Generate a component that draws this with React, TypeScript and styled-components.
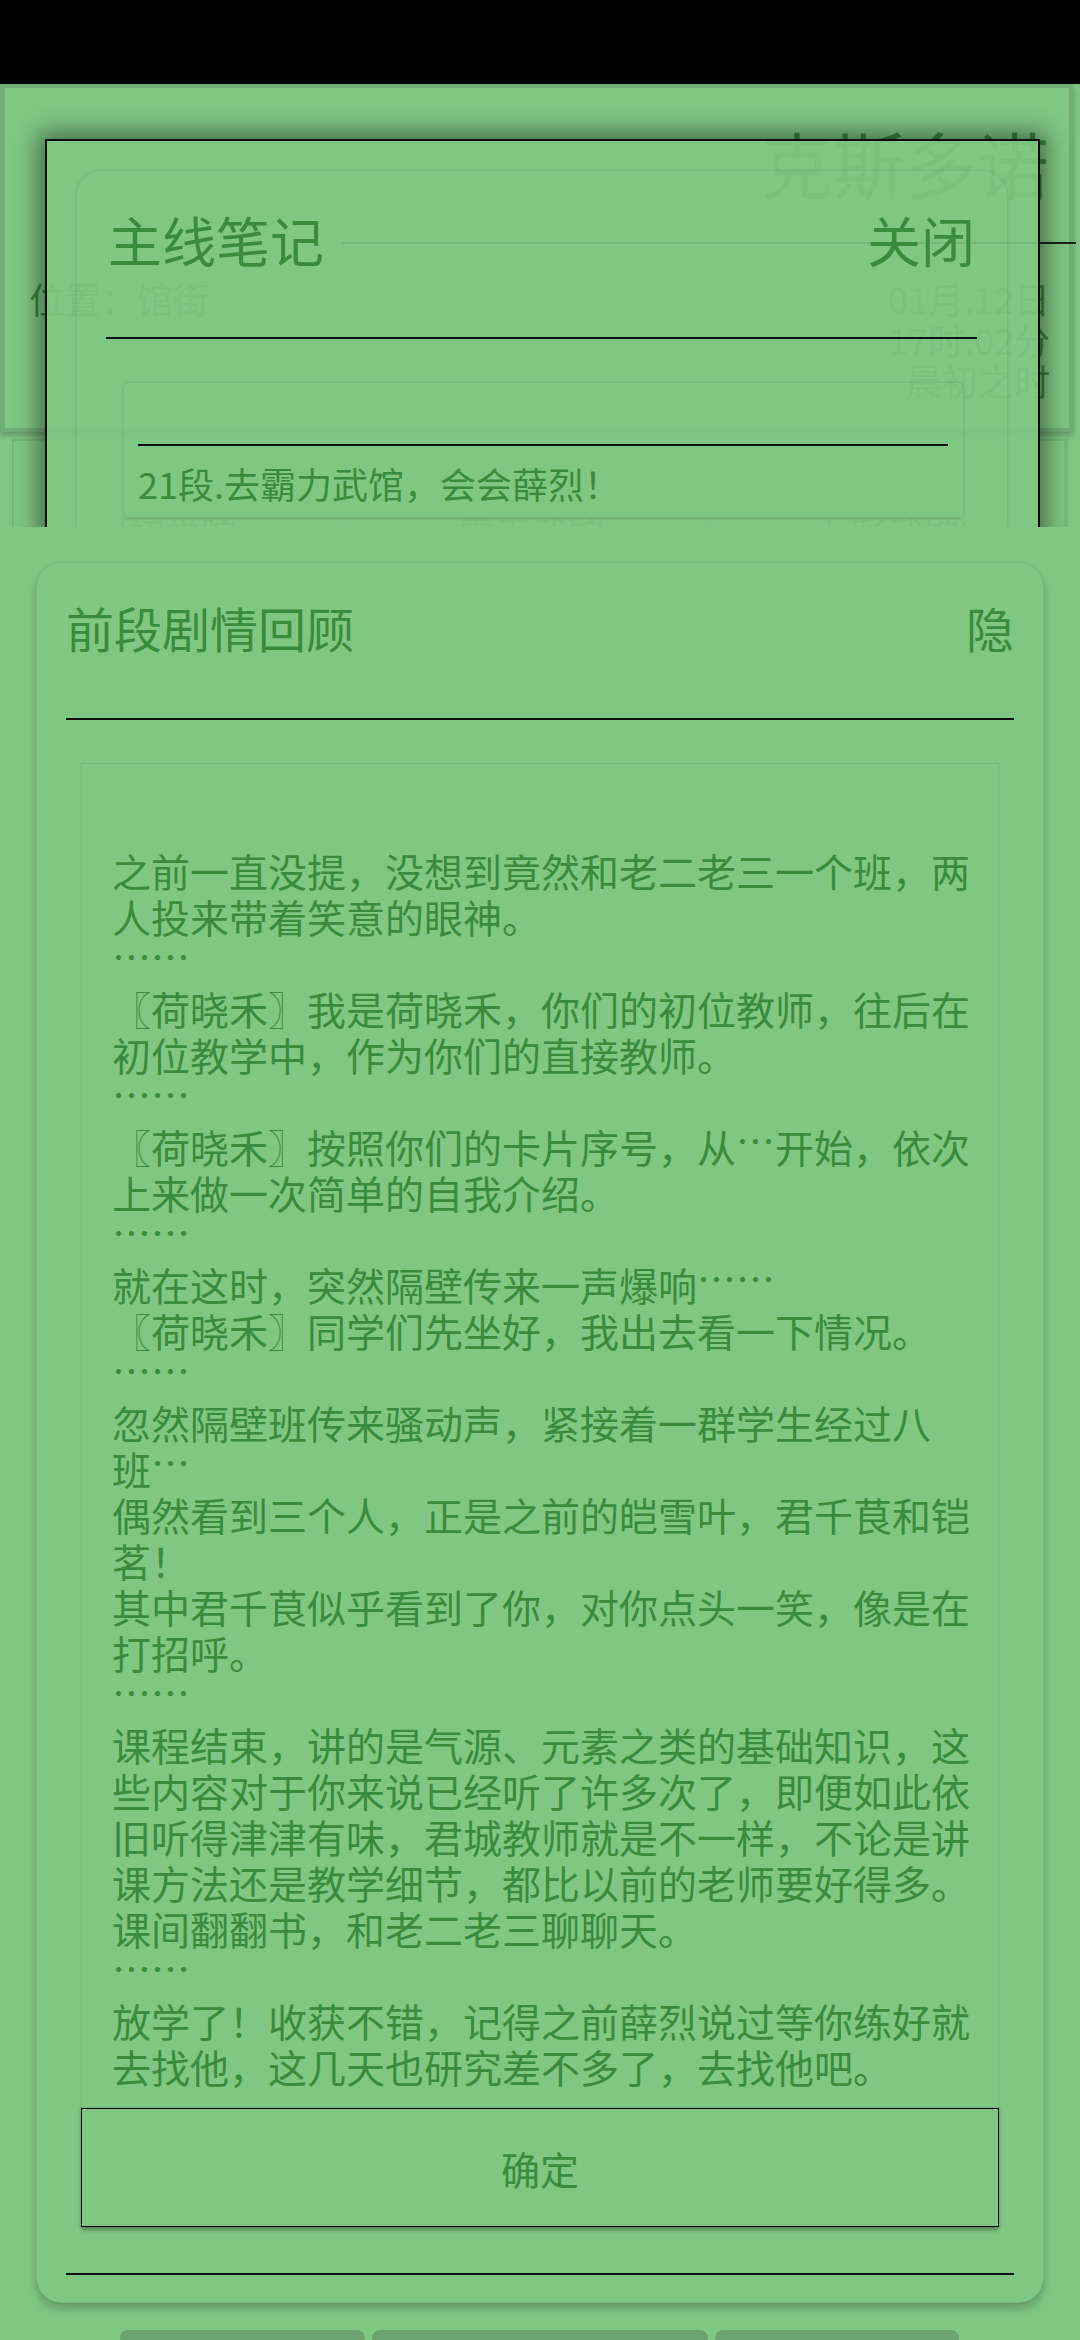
import React from "react"
import styled, { createGlobalStyle } from "styled-components"

const GREEN = "#81c784"
const INK = "#3a8b3e"

const GlobalStyle = createGlobalStyle`
  html, body {
    margin: 0;
    padding: 0;
    background: ${GREEN};
  }
  body {
    font-family: "Noto Sans CJK SC", "Noto Sans", sans-serif;
  }
`

const Screen = styled.div`
  position: relative;
  width: 1080px;
  height: 2340px;
  overflow: hidden;
  background: ${GREEN};
  color: ${INK};
  font-family: "Noto Sans CJK SC", sans-serif;
`

const StatusBar = styled.div`
  height: 84px;
  background: #000;
`

/* ---------- game screen behind the dialogs ---------- */

const InfoPanel = styled.section`
  box-sizing: border-box;
  height: 348px;
  margin-right: 7px;
  border: 4px solid rgba(0, 0, 0, 0.12);
  border-left-width: 5px;
  box-shadow: 0 3px 6px rgba(0, 0, 0, 0.25);
  display: flex;
  flex-direction: column;
`

const CityName = styled.div`
  margin-top: 29px;
  padding-right: 20px;
  font-size: 72px;
  line-height: 90px;
  text-align: right;
`

const CityRule = styled.div`
  margin: 35px -7px 0 337px;
  height: 2px;
  background: #1e1e1e;
`

const InfoRow = styled.div`
  margin-top: 34px;
  padding: 0 19px 0 24px;
  display: flex;
  justify-content: space-between;
  font-size: 36px;
  line-height: 41px;
`

const TimeCol = styled.div`
  text-align: right;
`

const TabRow = styled.div`
  margin: 7px 12px 0 12px;
  height: 130px;
  display: grid;
  grid-template-columns: 339px 358px 1fr;
  border: 2px solid rgba(0, 0, 0, 0.08);
`

const TabCell = styled.div`
  padding-top: 70px;
  text-align: center;
  font-size: 36px;
  line-height: 44px;
  border-right: 2px solid rgba(0, 0, 0, 0.06);
`

/* ---------- 主线笔记 dialog ---------- */

const NotesDialog = styled.div`
  position: absolute;
  left: 45px;
  top: 139px;
  width: 995px;
  height: 1500px;
  box-sizing: border-box;
  padding: 29px 30px 0 29px;
  border: 2px solid #0d0d0d;
  background: rgba(129, 199, 132, 0.9);
  box-shadow: 0 0 22px 7px rgba(0, 0, 0, 0.45);
`

const NotesCard = styled.div`
  height: 1300px;
  padding-top: 37px;
  border: 1px solid rgba(0, 0, 0, 0.06);
  border-radius: 26px;
  box-shadow: 0 1px 4px rgba(0, 0, 0, 0.1);
`

const DialogHeader = styled.div<{ $size: number; $line: number; $pad: string }>`
  display: flex;
  justify-content: space-between;
  align-items: center;
  padding: ${(p) => p.$pad};
  font-size: ${(p) => p.$size}px;
  line-height: ${(p) => p.$line}px;
`

const Rule = styled.div<{ $top: number; $left?: number; $right?: number }>`
  margin-top: ${(p) => p.$top}px;
  margin-left: ${(p) => p.$left ?? 0}px;
  margin-right: ${(p) => p.$right ?? 0}px;
  height: 2px;
  background: #111;
`

const QuestBox = styled.div<{ $gap: number }>`
  margin: ${(p) => p.$gap}px 43px 0 46px;
  min-height: 60px;
  padding: 61px 15px 12px 14px;
  border: 1px solid rgba(0, 0, 0, 0.07);
  border-radius: 6px;
  box-shadow: 0 1px 3px rgba(0, 0, 0, 0.1);
`

const QuestText = styled.div`
  margin-top: 15px;
  font-size: 36px;
  line-height: 44px;
`

/* ---------- 前段剧情回顾 sheet ---------- */

const Sheet = styled.div`
  position: absolute;
  top: 527px;
  left: 0;
  right: 0;
  bottom: 0;
  background: ${GREEN};
  display: flex;
  flex-direction: column;
`

const ReviewCard = styled.div`
  margin: 35px 36px 0;
  padding: 34px 29px 27px;
  border: 1px solid rgba(0, 0, 0, 0.04);
  border-radius: 26px;
  box-shadow: 0 0 2px rgba(0, 0, 0, 0.12), 0 6px 10px rgba(0, 0, 0, 0.22);
`

const StoryBox = styled.div`
  margin: 43px 15px 0;
  height: 1345px;
  box-sizing: border-box;
  padding: 83px 24px 18px 30px;
  border: 1px solid rgba(0, 0, 0, 0.07);
  box-shadow: 0 1px 2px rgba(0, 0, 0, 0.08);
  overflow: hidden;
  font-size: 39px;
  line-height: 46px;
`

const StoryLine = styled.div`
  margin: 0;
`

// the phone draws the ellipsis centred on the ideograph line, not on the baseline
const Dots = styled.span`
  position: relative;
  top: -0.17em;
`

const ConfirmButton = styled.div`
  margin: 0 15px;
  height: 119px;
  box-sizing: border-box;
  border: 1px solid #000;
  box-shadow: 0 3px 4px rgba(0, 0, 0, 0.35);
  display: flex;
  align-items: center;
  justify-content: center;
  font-size: 39px;
`

const NavBars = styled.div`
  margin-top: 27px;
  padding-left: 120px;
  display: flex;
  gap: 7px;
`

const NavBar = styled.div<{ $w: number }>`
  width: ${(p) => p.$w}px;
  height: 16px;
  border-radius: 8px;
  background: rgba(0, 0, 0, 0.17);
`

// split text on ellipses so they can be lifted to the middle of the line
function withDots(text: string) {
  return text.split(/(…+)/).map((part, i) =>
    part.startsWith("…") ? <Dots key={i}>{part}</Dots> : part
  )
}

const story: string[] = [
  "之前一直没提，没想到竟然和老二老三一个班，两人投来带着笑意的眼神。",
  "……",
  "〖荷晓禾〗我是荷晓禾，你们的初位教师，往后在初位教学中，作为你们的直接教师。",
  "……",
  "〖荷晓禾〗按照你们的卡片序号，从…开始，依次上来做一次简单的自我介绍。",
  "……",
  "就在这时，突然隔壁传来一声爆响……",
  "〖荷晓禾〗同学们先坐好，我出去看一下情况。",
  "……",
  "忽然隔壁班传来骚动声，紧接着一群学生经过八\n班…",
  "偶然看到三个人，正是之前的皑雪叶，君千茛和铠茗！",
  "其中君千茛似乎看到了你，对你点头一笑，像是在打招呼。",
  "……",
  "课程结束，讲的是气源、元素之类的基础知识，这些内容对于你来说已经听了许多次了，即便如此依旧听得津津有味，君城教师就是不一样，不论是讲课方法还是教学细节，都比以前的老师要好得多。",
  "课间翻翻书，和老二老三聊聊天。",
  "……",
  "放学了！收获不错，记得之前薛烈说过等你练好就去找他，这几天也研究差不多了，去找他吧。",
]

export default function App() {
  return (
    <Screen lang="zh-CN">
      <GlobalStyle />
      <StatusBar />

      <InfoPanel>
        <CityName>克斯多诺</CityName>
        <CityRule />
        <InfoRow>
          <div>位置：馆街</div>
          <TimeCol>
            <div>01月.12日</div>
            <div>17时.02分</div>
            <div>晨初之时</div>
          </TimeCol>
        </InfoRow>
      </InfoPanel>
      <TabRow>
        <TabCell>初学院</TabCell>
        <TabCell>霸王武馆</TabCell>
        <TabCell>七彩武馆</TabCell>
      </TabRow>

      <NotesDialog>
        <NotesCard>
          <DialogHeader $size={54} $line={64} $pad="0 32px 0 31px">
            <span>主线笔记</span>
            <span>关闭</span>
          </DialogHeader>
          <Rule $top={65} $left={29} $right={30} />
          <QuestBox $gap={43}>
            <Rule $top={0} />
            <QuestText>21段.去霸力武馆，会会薛烈！</QuestText>
          </QuestBox>
          <QuestBox $gap={0} />
        </NotesCard>
      </NotesDialog>

      <Sheet>
        <ReviewCard>
          <DialogHeader $size={48} $line={60} $pad="0">
            <span>前段剧情回顾</span>
            <span>隐</span>
          </DialogHeader>
          <Rule $top={61} />
          <StoryBox>
            {story.map((line, i) => (
              <StoryLine key={i}>
                {line.split("\n").map((seg, j) => (
                  <React.Fragment key={j}>
                    {j > 0 && <br />}
                    {withDots(seg)}
                  </React.Fragment>
                ))}
              </StoryLine>
            ))}
          </StoryBox>
          <ConfirmButton>确定</ConfirmButton>
          <Rule $top={46} />
        </ReviewCard>
        <NavBars>
          <NavBar $w={245} />
          <NavBar $w={336} />
          <NavBar $w={244} />
        </NavBars>
      </Sheet>
    </Screen>
  )
}
